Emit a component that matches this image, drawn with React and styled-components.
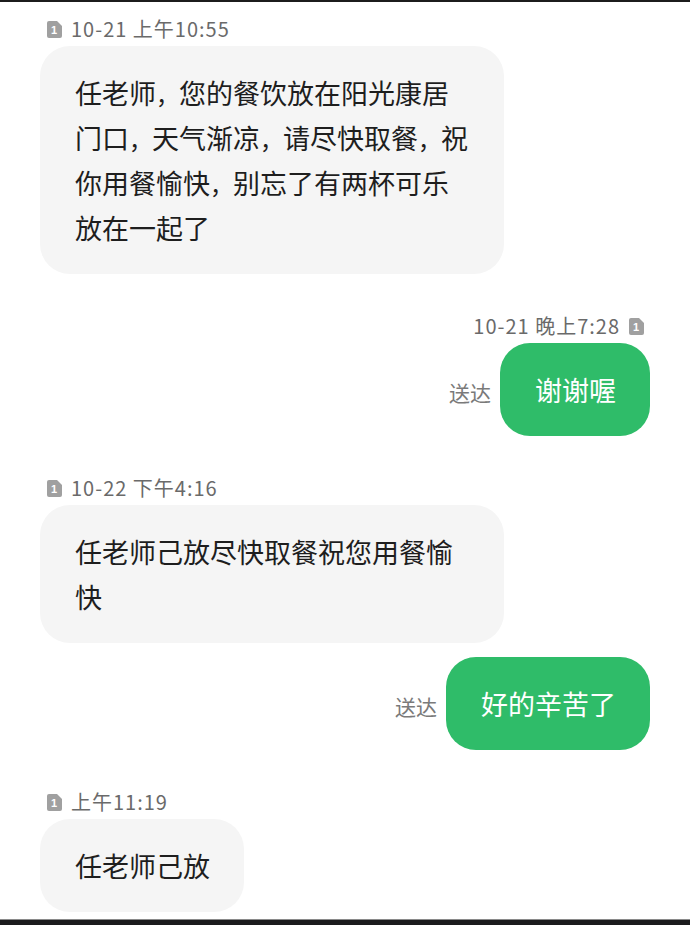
import React from "react";
import styled, { createGlobalStyle } from "styled-components";

const GlobalStyle = createGlobalStyle`
  html, body {
    margin: 0;
    padding: 0;
    background: #ffffff;
  }
  body {
    font-family: "Noto Sans CJK SC", "Noto Sans", sans-serif;
  }
`;

const messages = [
  {
    id: 1,
    side: "left",
    time: "10-21 上午10:55",
    text: "任老师，您的餐饮放在阳光康居门口，天气渐凉，请尽快取餐，祝你用餐愉快，别忘了有两杯可乐放在一起了",
  },
  { id: 2, side: "right", time: "10-21 晚上7:28", text: "谢谢喔", status: "送达" },
  { id: 3, side: "left", time: "10-22 下午4:16", text: "任老师己放尽快取餐祝您用餐愉快" },
  { id: 4, side: "right", text: "好的辛苦了", status: "送达" },
  { id: 5, side: "left", time: "上午11:19", text: "任老师己放" },
];

const SimIcon = () => (
  <svg width="15" height="17" viewBox="0 0 15 17">
    <path d="M2 0 H10 L15 5 V15 Q15 17 13 17 H2 Q0 17 0 15 V2 Q0 0 2 0 Z" fill="#a0a0a0" />
    <text x="7.5" y="13.4" textAnchor="middle" fontSize="11" fontWeight="700" fill="#ffffff" fontFamily="Liberation Sans, sans-serif">
      1
    </text>
  </svg>
);

// the chat app draws its commas narrower than a full CJK cell
const renderText = (text) =>
  text.split("，").map((part, i, arr) => (
    <React.Fragment key={i}>
      {part}
      {i < arr.length - 1 && <Comma>，</Comma>}
    </React.Fragment>
  ));

const App = () => {
  return (
    <Screen>
      <GlobalStyle />
      <TopEdge />
      <Thread>
        {messages.map((m) => (
          <Group key={m.id} $spaced={!!m.time}>
            {m.time && (
              <Stamp $side={m.side}>
                {m.side === "left" && <SimIcon />}
                <span>{m.time}</span>
                {m.side === "right" && <SimIcon />}
              </Stamp>
            )}
            <Row $side={m.side}>
              {m.status && <Status>{m.status}</Status>}
              <Bubble $side={m.side}>{renderText(m.text)}</Bubble>
            </Row>
          </Group>
        ))}
      </Thread>
      <NavBar />
    </Screen>
  );
};

export default App;

const Screen = styled.div`
  min-height: 100vh;
  display: flex;
  flex-direction: column;
`;

const TopEdge = styled.div`
  height: 2px;
  background: #1c1c1c;
`;

const Thread = styled.div`
  display: flex;
  flex-direction: column;
  padding: 15px 40px 0;
`;

const Group = styled.div`
  display: flex;
  flex-direction: column;
  gap: 5px;
  margin-top: ${(p) => (p.$spaced ? "40px" : "14px")};

  &:first-child {
    margin-top: 0;
  }
`;

const Stamp = styled.div`
  display: flex;
  align-items: center;
  gap: 9px;
  align-self: ${(p) => (p.$side === "right" ? "flex-end" : "flex-start")};
  padding: ${(p) => (p.$side === "right" ? "0 6px 0 0" : "0 0 0 7px")};
  height: 24px;
  font-size: 20px;
  line-height: 24px;
  letter-spacing: 1px;
  color: #6a6a6a;

  svg {
    flex-shrink: 0;
  }
`;

const Row = styled.div`
  display: flex;
  align-items: center;
  justify-content: ${(p) => (p.$side === "right" ? "flex-end" : "flex-start")};
  gap: 9px;
`;

const Status = styled.span`
  font-size: 21px;
  line-height: 24px;
  color: #7a7a7a;
  margin-top: 4px;
`;

const Bubble = styled.div`
  box-sizing: border-box;
  max-width: 464px;
  padding: 24px 34px 24px 35px;
  border-radius: 30px;
  font-size: 27px;
  line-height: 45px;
  background: ${(p) => (p.$side === "right" ? "#2fbc69" : "#f5f5f5")};
  color: ${(p) => (p.$side === "right" ? "#ffffff" : "#1e1e1e")};
  word-break: break-all;
`;

const Comma = styled.span`
  font-size: 23px;
  line-height: 1;
`;

const NavBar = styled.div`
  margin-top: auto;
  height: 5px;
  background: #1b1b1d;
  border-top: 1px solid #8a8a8a;
`;
